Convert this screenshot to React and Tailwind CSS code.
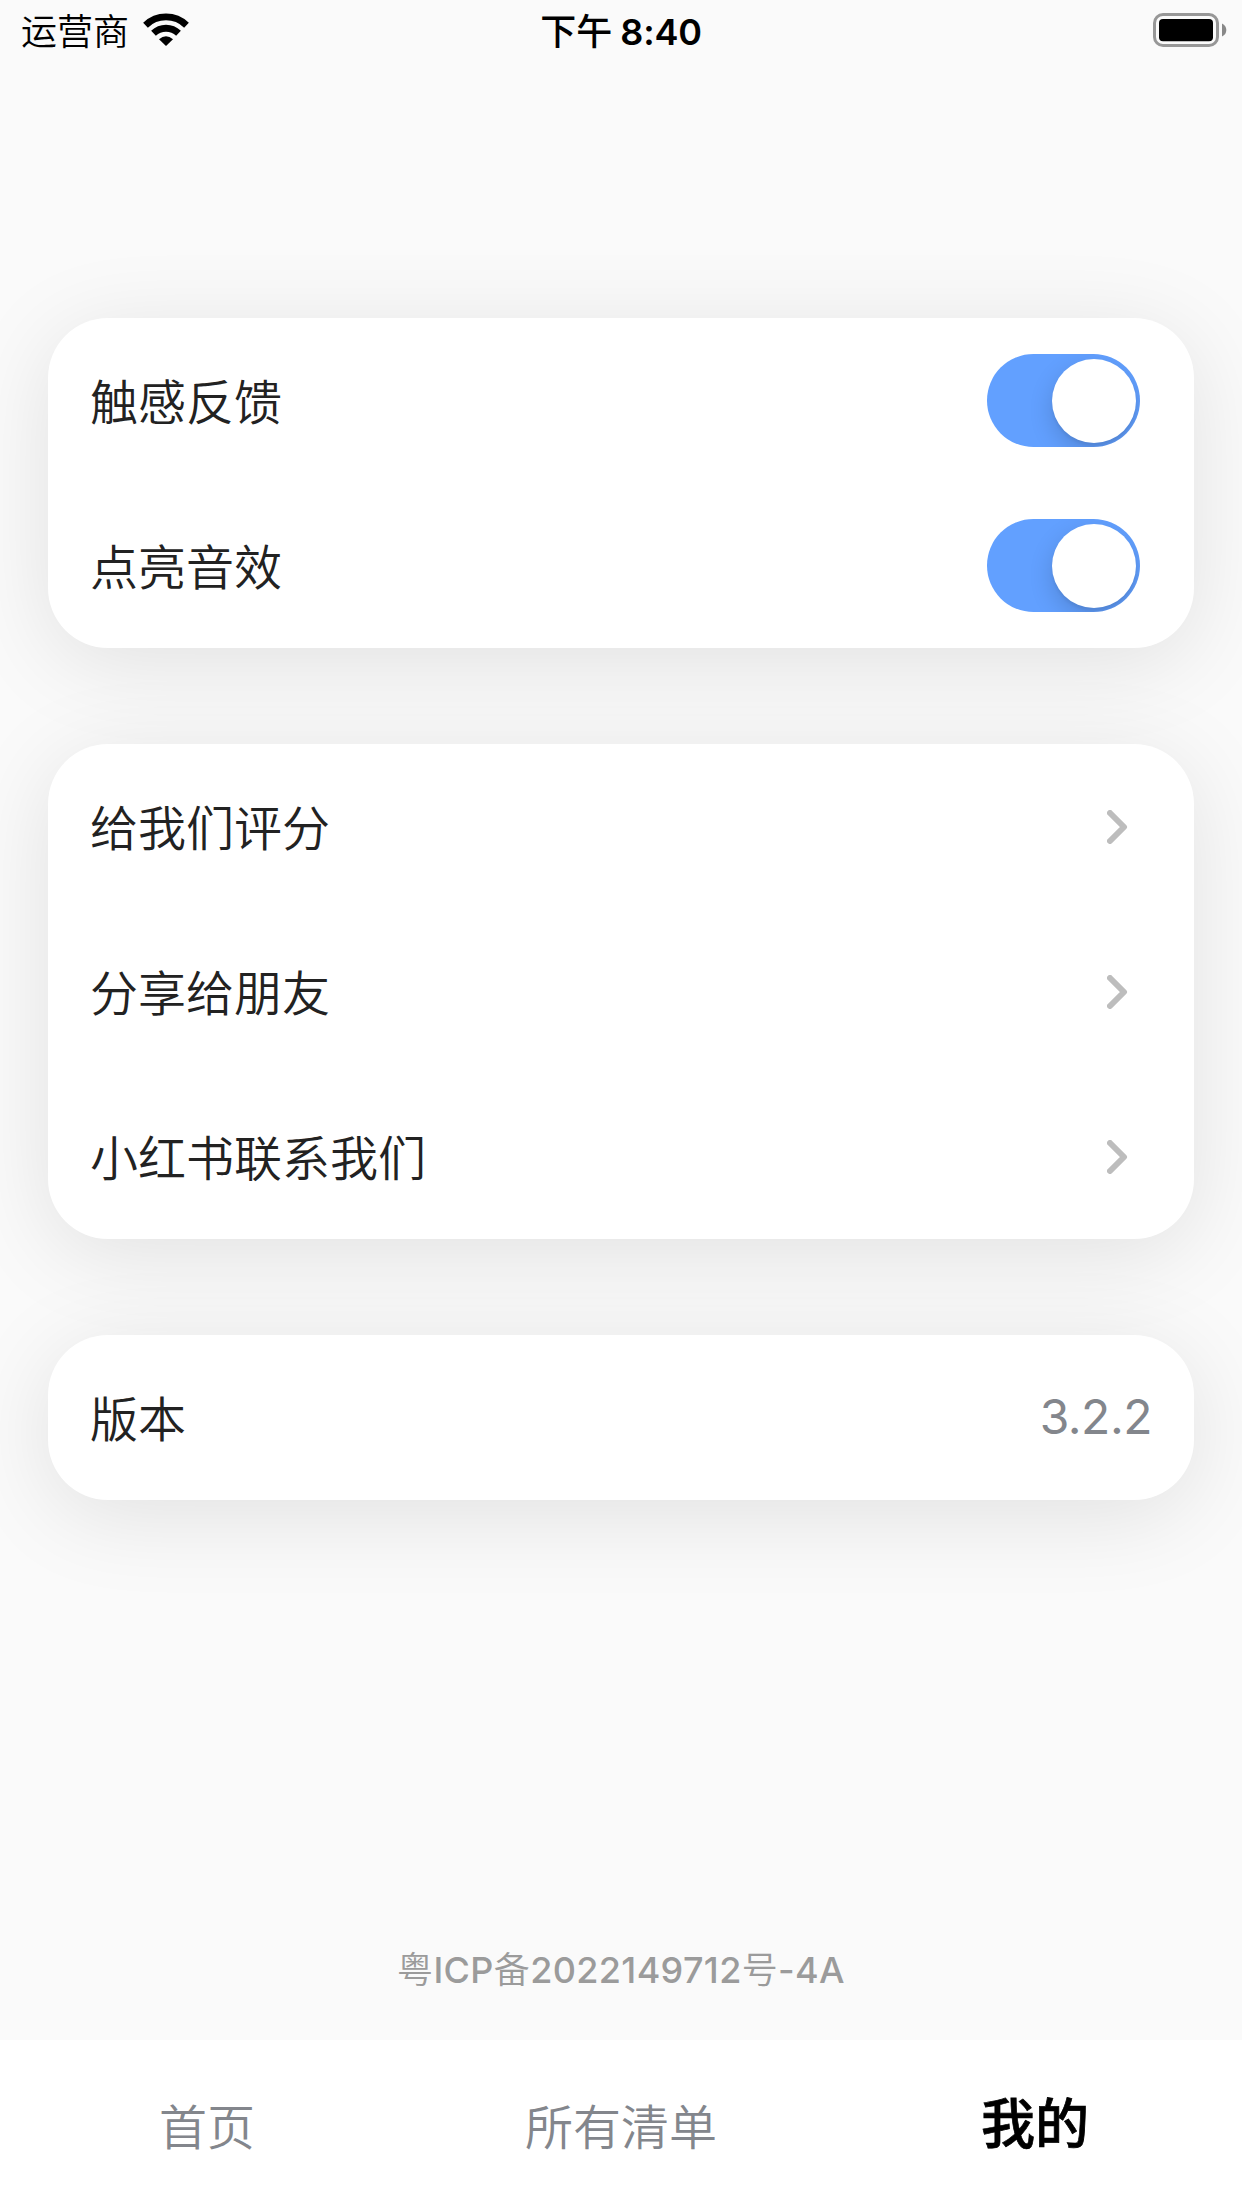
import React from "react";

function Toggle() {
  return (
    <div className="relative mr-[12px] h-[93px] w-[153px] overflow-hidden rounded-full bg-[#62a0ff]">
      <div className="absolute top-[4.5px] right-[4.5px] size-[84px] rounded-full bg-white shadow-[0_9px_24px_rgba(0,0,0,0.16),0_3px_3px_rgba(0,0,0,0.06)]" />
    </div>
  );
}

function Chevron() {
  return (
    <svg className="mr-[24px] h-[34px] w-[21px]" viewBox="0 0 21 34" fill="none" stroke="#bdbdbd" strokeWidth="6" strokeLinecap="round" strokeLinejoin="round">
      <path d="M3 3 L17 17 L3 31" />
    </svg>
  );
}

function Card({ children }) {
  return <section className="rounded-[60px] bg-white shadow-[0_15px_90px_rgba(0,0,0,0.1)]">{children}</section>;
}

function Row({ label, children }) {
  return (
    <div className="flex h-[165px] items-center justify-between px-[42px]">
      <span className="pt-[5px] text-[48px] leading-[60px] font-[350] text-[#222222]">{label}</span>
      {children}
    </div>
  );
}

export default function App() {
  return (
    <div className="flex h-[2208px] w-[1242px] flex-col overflow-hidden bg-[#fafafa] font-['Inter','Noto_Sans_CJK_SC',sans-serif]">
      <header className="grid h-[60px] shrink-0 grid-cols-3 items-center text-black">
        <div className="flex items-center gap-[14px] pl-[21px] text-[36px] leading-[56px]">
          <span className="pt-[3px] font-[350]">运营商</span>
          <svg className="h-[34px] w-[46px]" viewBox="0 0 46 34" fill="none" stroke="#000" strokeWidth="6.8">
            <path d="M2.5 12.2 A29.5 29.5 0 0 1 43.5 12.2" />
            <path d="M10.5 20.3 A18 18 0 0 1 35.5 20.3" />
            <path d="M23 33 L16 26.2 Q23 20.5 30 26.2 Z" fill="#000" stroke="none" />
          </svg>
        </div>
        <div className="flex justify-center gap-[8px] pt-[3px] text-[36px] leading-[56px]">
          <span className="font-medium">下午</span>
          <span className="font-semibold tracking-[-0.2px]">8:40</span>
        </div>
        <svg className="mr-[14px] h-[34px] w-[75px] justify-self-end" viewBox="0 0 75 34">
          <rect x="1.5" y="1.5" width="63" height="31" rx="8.5" fill="none" stroke="#979797" strokeWidth="3" />
          <rect x="6" y="6" width="54" height="22.3" rx="4" fill="#000" />
          <path d="M69 10.5 Q73.3 12.5 73.3 17 Q73.3 21.5 69 23.5 Z" fill="#888888" />
        </svg>
      </header>
      <main className="flex flex-1 flex-col gap-[96px] px-[48px] pt-[258px]">
        <Card>
          <Row label="触感反馈"><Toggle /></Row>
          <Row label="点亮音效"><Toggle /></Row>
        </Card>
        <Card>
          <Row label="给我们评分"><Chevron /></Row>
          <Row label="分享给朋友"><Chevron /></Row>
          <Row label="小红书联系我们"><Chevron /></Row>
        </Card>
        <Card>
          <Row label="版本"><span className="pb-[1px] text-[48px] font-[370] tracking-[-0.5px] text-[#83868c]">3.2.2</span></Row>
        </Card>
      </main>
      <p className="mb-[48px] text-center text-[36px] leading-[44px] tracking-[0.35px] text-[#9b9b9b]">
        <span className="font-[350]">粤</span>
        <span className="font-[450]">ICP</span>
        <span className="font-[350]">备</span>
        <span className="font-[450]">2022149712</span>
        <span className="font-[350]">号</span>
        <span className="font-[450]">-4A</span>
      </p>
      <nav className="grid h-[168px] shrink-0 grid-cols-3 items-center bg-white text-center text-[48px] text-[#83868c]">
        <span className="pt-[7px] font-[350]">首页</span>
        <span className="pt-[7px] font-[350]">所有清单</span>
        <span className="text-[54px] font-medium text-black [-webkit-text-stroke:0.7px_#000]">我的</span>
      </nav>
    </div>
  );
}
